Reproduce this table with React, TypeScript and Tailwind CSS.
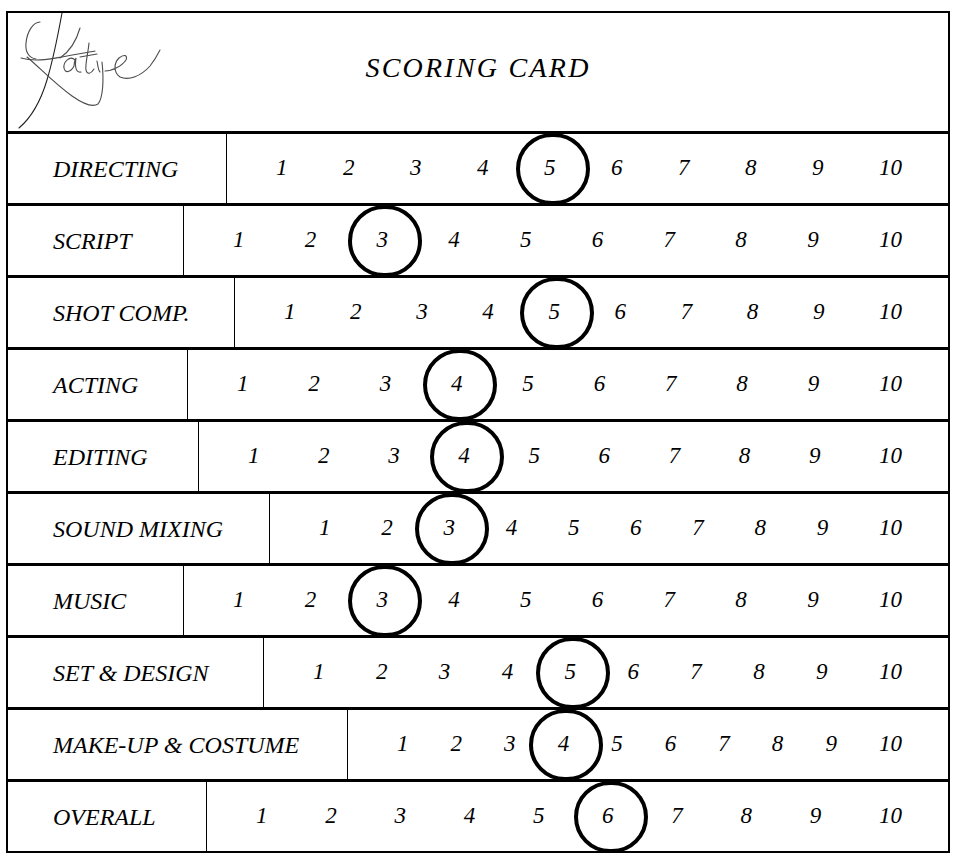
import React from 'react'

interface ScoreRow {
  label: string
  width: string
  score: number
}

const rows: ScoreRow[] = [
  { label: 'DIRECTING', width: 'w-[219px]', score: 5 },
  { label: 'SCRIPT', width: 'w-[176px]', score: 3 },
  { label: 'SHOT COMP.', width: 'w-[227px]', score: 5 },
  { label: 'ACTING', width: 'w-[180px]', score: 4 },
  { label: 'EDITING', width: 'w-[191px]', score: 4 },
  { label: 'SOUND MIXING', width: 'w-[262px]', score: 3 },
  { label: 'MUSIC', width: 'w-[176px]', score: 3 },
  { label: 'SET & DESIGN', width: 'w-[256px]', score: 5 },
  { label: 'MAKE-UP & COSTUME', width: 'w-[340px]', score: 4 },
  { label: 'OVERALL', width: 'w-[199px]', score: 6 },
]

const numbers = [1, 2, 3, 4, 5, 6, 7, 8, 9, 10]

function Signature() {
  // hand-written "Katie", page coordinates
  return (
    <svg
      className="absolute left-0 top-0"
      width="170"
      height="118"
      viewBox="8 13 170 118"
      fill="none"
      stroke="#4b4b4b"
      strokeWidth="1.1"
      strokeLinecap="round"
    >
      <path d="M62,13 C58,35 53,60 47,80 C41,100 32,117 19,128" stroke="#222" />
      <path d="M40,22 C33,22 27,32 26,43 C25,52 29,58 36,59" />
      <path d="M21,58 C35,62 50,59 62,57 C72,55 84,53 95,51" />
      <path d="M27,57 C40,68 55,84 72,96 C82,103 92,108 98,104 C103,98 104,80 102,62" />
      <path d="M80,28 C76,42 69,52 60,58" />
      <path d="M75,60 C70,55 63,62 64,68 C65,74 71,72 74,66 C74,62 75,60 76,58 C75,65 75,73 81,72" />
      <path d="M89,43 C88,54 85,64 86,70 C87,75 91,74 94,69" />
      <path d="M80,57 L97,54" />
      <path d="M97,61 C98,66 98,70 100,72" />
      <path d="M105,71 C112,71 122,66 126,60 C128,55 124,54 119,58 C114,63 113,72 120,77 C129,81 141,76 150,66 C154,61 157,56 160,50" />
    </svg>
  )
}

export default function App() {
  return (
    <div className="min-h-screen bg-white pt-[11px] pl-[6px] font-['Liberation_Serif',serif] italic text-black">
      <div className="w-[944px] border-2 border-black">
        {/* Header */}
        <div className="relative flex h-[118px] items-center justify-center">
          <Signature />
          <h1 className="pb-2 text-[28px] tracking-[0.08em]">SCORING CARD</h1>
        </div>

        {/* Rows */}
        {rows.map(row => (
          <div key={row.label} className="flex h-[72px] border-t-[3px] border-black">
            <div className={`${row.width} flex h-full shrink-0 items-center border-r-[1.5px] border-black pl-[45px] text-[24px]`}>
              {row.label}
            </div>
            <div className="flex h-full flex-1 items-center justify-between pl-[49px] pr-[46px] text-[23px]">
              {numbers.map(n => (
                <span key={n} className="relative flex h-full items-center">
                  {n}
                  {n === row.score && (
                    <span className="absolute left-[calc(50%-34px)] top-1/2 z-10 h-[72px] w-[74px] -translate-y-1/2 rounded-full border-4 border-black" />
                  )}
                </span>
              ))}
            </div>
          </div>
        ))}
      </div>
    </div>
  )
}
